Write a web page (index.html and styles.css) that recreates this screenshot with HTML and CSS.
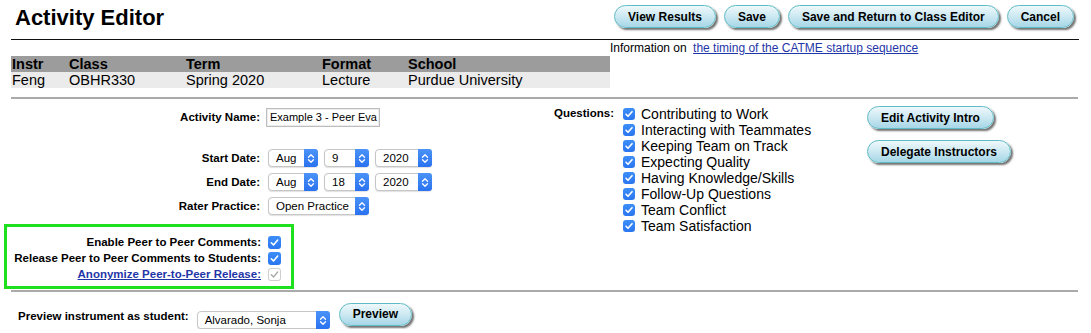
FILE: index.html
```html
<!DOCTYPE html>
<html lang="en">
<head>
  <meta charset="UTF-8" />
  <title>Activity Editor</title>
  <link rel="stylesheet" href="styles.css">
</head>
<body>
  <div class="page">
    <div class="top-bar">
      <h1>Activity Editor</h1>
      <div class="top-buttons">
        <button class="pill">View Results</button>
        <button class="pill">Save</button>
        <button class="pill">Save and Return to Class Editor</button>
        <button class="pill">Cancel</button>
      </div>
    </div>

    <div class="class-row">
      <div class="class-table">
        <div class="ct-head">
          <span>Instr</span><span>Class</span><span>Term</span><span>Format</span><span>School</span>
        </div>
        <div class="ct-body">
          <span>Feng</span><span>OBHR330</span><span>Spring 2020</span><span>Lecture</span><span>Purdue University</span>
        </div>
      </div>
      <div class="info">Information on <a href="#">the timing of the CATME startup sequence</a></div>
    </div>

    <div class="rule"></div>

    <div class="form-area">
      <div class="left-col">
        <div class="frow first">
          <label>Activity Name:</label>
          <div class="text-input">Example 3 - Peer Eva</div>
        </div>
        <div class="frow">
          <label>Start Date:</label>
          <div class="ctrls">
            <span class="select w-mon"><span class="val">Aug</span><span class="arrow"><svg width="8" height="11" viewBox="0 0 8 11"><path d="M1.5 4.2 L4 1.8 L6.5 4.2 M1.5 6.8 L4 9.2 L6.5 6.8" fill="none" stroke="#fff" stroke-width="1.3" stroke-linecap="round" stroke-linejoin="round"/></svg></span></span>
            <span class="select w-day"><span class="val">9</span><span class="arrow"><svg width="8" height="11" viewBox="0 0 8 11"><path d="M1.5 4.2 L4 1.8 L6.5 4.2 M1.5 6.8 L4 9.2 L6.5 6.8" fill="none" stroke="#fff" stroke-width="1.3" stroke-linecap="round" stroke-linejoin="round"/></svg></span></span>
            <span class="select w-year"><span class="val">2020</span><span class="arrow"><svg width="8" height="11" viewBox="0 0 8 11"><path d="M1.5 4.2 L4 1.8 L6.5 4.2 M1.5 6.8 L4 9.2 L6.5 6.8" fill="none" stroke="#fff" stroke-width="1.3" stroke-linecap="round" stroke-linejoin="round"/></svg></span></span>
          </div>
        </div>
        <div class="frow">
          <label>End Date:</label>
          <div class="ctrls">
            <span class="select w-mon"><span class="val">Aug</span><span class="arrow"><svg width="8" height="11" viewBox="0 0 8 11"><path d="M1.5 4.2 L4 1.8 L6.5 4.2 M1.5 6.8 L4 9.2 L6.5 6.8" fill="none" stroke="#fff" stroke-width="1.3" stroke-linecap="round" stroke-linejoin="round"/></svg></span></span>
            <span class="select w-day"><span class="val">18</span><span class="arrow"><svg width="8" height="11" viewBox="0 0 8 11"><path d="M1.5 4.2 L4 1.8 L6.5 4.2 M1.5 6.8 L4 9.2 L6.5 6.8" fill="none" stroke="#fff" stroke-width="1.3" stroke-linecap="round" stroke-linejoin="round"/></svg></span></span>
            <span class="select w-year"><span class="val">2020</span><span class="arrow"><svg width="8" height="11" viewBox="0 0 8 11"><path d="M1.5 4.2 L4 1.8 L6.5 4.2 M1.5 6.8 L4 9.2 L6.5 6.8" fill="none" stroke="#fff" stroke-width="1.3" stroke-linecap="round" stroke-linejoin="round"/></svg></span></span>
          </div>
        </div>
        <div class="frow">
          <label>Rater Practice:</label>
          <div class="ctrls">
            <span class="select w-rater"><span class="val">Open Practice</span><span class="arrow"><svg width="8" height="11" viewBox="0 0 8 11"><path d="M1.5 4.2 L4 1.8 L6.5 4.2 M1.5 6.8 L4 9.2 L6.5 6.8" fill="none" stroke="#fff" stroke-width="1.3" stroke-linecap="round" stroke-linejoin="round"/></svg></span></span>
          </div>
        </div>

        <div class="peer-box">
          <div class="prow">
            <label>Enable Peer to Peer Comments:</label>
            <span class="cb"><svg width="13" height="13" viewBox="0 0 13 13"><path d="M3.3 6.8 L5.5 9 L9.7 4" fill="none" stroke="#fff" stroke-width="1.6" stroke-linecap="round" stroke-linejoin="round"/></svg></span>
          </div>
          <div class="prow">
            <label>Release Peer to Peer Comments to Students:</label>
            <span class="cb"><svg width="13" height="13" viewBox="0 0 13 13"><path d="M3.3 6.8 L5.5 9 L9.7 4" fill="none" stroke="#fff" stroke-width="1.6" stroke-linecap="round" stroke-linejoin="round"/></svg></span>
          </div>
          <div class="prow">
            <label><a href="#">Anonymize Peer-to-Peer Release:</a></label>
            <span class="cb disabled"><svg width="13" height="13" viewBox="0 0 13 13"><path d="M3.3 6.8 L5.5 9 L9.7 4" fill="none" stroke="#a8a8a8" stroke-width="1.3" stroke-linecap="round" stroke-linejoin="round"/></svg></span>
          </div>
        </div>
      </div>

      <div class="questions">
        <div class="q-label">Questions:</div>
        <ul class="q-list">
          <li><span class="cb"><svg width="12" height="12" viewBox="0 0 12 12"><path d="M3 6.3 L5 8.3 L9 3.7" fill="none" stroke="#fff" stroke-width="1.6" stroke-linecap="round" stroke-linejoin="round"/></svg></span>Contributing to Work</li>
          <li><span class="cb"><svg width="12" height="12" viewBox="0 0 12 12"><path d="M3 6.3 L5 8.3 L9 3.7" fill="none" stroke="#fff" stroke-width="1.6" stroke-linecap="round" stroke-linejoin="round"/></svg></span>Interacting with Teammates</li>
          <li><span class="cb"><svg width="12" height="12" viewBox="0 0 12 12"><path d="M3 6.3 L5 8.3 L9 3.7" fill="none" stroke="#fff" stroke-width="1.6" stroke-linecap="round" stroke-linejoin="round"/></svg></span>Keeping Team on Track</li>
          <li><span class="cb"><svg width="12" height="12" viewBox="0 0 12 12"><path d="M3 6.3 L5 8.3 L9 3.7" fill="none" stroke="#fff" stroke-width="1.6" stroke-linecap="round" stroke-linejoin="round"/></svg></span>Expecting Quality</li>
          <li><span class="cb"><svg width="12" height="12" viewBox="0 0 12 12"><path d="M3 6.3 L5 8.3 L9 3.7" fill="none" stroke="#fff" stroke-width="1.6" stroke-linecap="round" stroke-linejoin="round"/></svg></span>Having Knowledge/Skills</li>
          <li><span class="cb"><svg width="12" height="12" viewBox="0 0 12 12"><path d="M3 6.3 L5 8.3 L9 3.7" fill="none" stroke="#fff" stroke-width="1.6" stroke-linecap="round" stroke-linejoin="round"/></svg></span>Follow-Up Questions</li>
          <li><span class="cb"><svg width="12" height="12" viewBox="0 0 12 12"><path d="M3 6.3 L5 8.3 L9 3.7" fill="none" stroke="#fff" stroke-width="1.6" stroke-linecap="round" stroke-linejoin="round"/></svg></span>Team Conflict</li>
          <li><span class="cb"><svg width="12" height="12" viewBox="0 0 12 12"><path d="M3 6.3 L5 8.3 L9 3.7" fill="none" stroke="#fff" stroke-width="1.6" stroke-linecap="round" stroke-linejoin="round"/></svg></span>Team Satisfaction</li>
        </ul>
      </div>

      <div class="side-buttons">
        <button class="pill">Edit Activity Intro</button>
        <button class="pill">Delegate Instructors</button>
      </div>
    </div>

    <div class="rule bottom"></div>

    <div class="preview-row">
      <label>Preview instrument as student:</label>
      <span class="select w-student"><span class="val">Alvarado, Sonja</span><span class="arrow"><svg width="8" height="11" viewBox="0 0 8 11"><path d="M1.5 4.2 L4 1.8 L6.5 4.2 M1.5 6.8 L4 9.2 L6.5 6.8" fill="none" stroke="#fff" stroke-width="1.3" stroke-linecap="round" stroke-linejoin="round"/></svg></span></span>
      <button class="pill">Preview</button>
    </div>
  </div>
</body>
</html>
```

FILE: styles.css
```css
body {
  font-family: "Liberation Sans", Arial, Helvetica, sans-serif;
  margin: 0;
  padding: 0;
  color: #000;
  background: #fff;
}

.page {
  margin: 0 12px 0 11px;
}

a {
  color: #1f36a8;
}

/* top bar */
.top-bar {
  display: flex;
  justify-content: space-between;
  align-items: flex-start;
  height: 39px;
  border-bottom: 1px solid #111;
}

.top-bar h1 {
  font-size: 22px;
  line-height: 26px;
  margin: 5px 0 0 4px;
}

.top-buttons {
  display: flex;
  gap: 8px;
  margin: 5px 5px 0 0;
}

.pill {
  font-family: "Liberation Sans", Arial, sans-serif;
  font-size: 12px;
  font-weight: bold;
  height: 23px;
  padding: 0 13px;
  border: 1px solid #5fbcc4;
  border-radius: 12px;
  background: linear-gradient(#eef8fb, #cfeaf3 45%, #a7d6e7);
  box-shadow: 2px 2px 2px rgba(0, 0, 0, 0.55);
  color: #000;
  cursor: pointer;
}

/* class info */
.class-row {
  display: flex;
  align-items: flex-start;
}

.class-table {
  width: 599px;
  margin-top: 16px;
  font-size: 14.5px;
  line-height: 16px;
}

.ct-head,
.ct-body {
  display: grid;
  grid-template-columns: 57px 117px 136px 86px 1fr;
  padding-left: 1px;
  height: 16px;
}

.ct-head {
  background: #9c9c9c;
  font-weight: bold;
}

.ct-body {
  background: #ebebeb;
}

.info {
  font-size: 12px;
  line-height: 14px;
  margin-top: 1px;
  white-space: nowrap;
}

.info a {
  margin-left: 3px;
}

.rule {
  height: 2px;
  background: #aaa;
  margin-top: 9px;
  margin-right: 1px;
}

.rule.bottom {
  margin-top: 1px;
}

/* form */
.form-area {
  display: grid;
  grid-template-columns: 543px 313px auto;
}

.left-col {
  padding-top: 8px;
}

.frow {
  display: grid;
  grid-template-columns: 249px auto;
  column-gap: 6px;
  align-items: center;
  height: 24px;
}

.frow.first {
  height: 20px;
  margin-bottom: 19px;
}

.frow label,
.prow label,
.q-label,
.preview-row label {
  font-size: 11.5px;
  font-weight: bold;
  text-align: right;
  white-space: nowrap;
}

.text-input {
  width: 109px;
  height: 17px;
  border: 1px solid #bdbdbd;
  box-shadow: inset 0 0 0 1px #ececec;
  font-size: 11px;
  line-height: 17px;
  padding: 0 0 0 3px;
  overflow: hidden;
  white-space: nowrap;
}

.ctrls {
  display: flex;
  gap: 6px;
  padding-left: 2px;
}

.select {
  display: inline-flex;
  align-items: stretch;
  height: 16px;
  border: 1px solid #c6c6c6;
  border-radius: 4px;
  background: #fff;
  box-shadow: 0 1px 1px rgba(0, 0, 0, 0.12);
  box-sizing: content-box;
  font-size: 11.5px;
  line-height: 16px;
}

.select .val {
  flex: 1;
  padding-left: 7px;
  white-space: nowrap;
  overflow: hidden;
}

.select .arrow {
  width: 14px;
  display: flex;
  align-items: center;
  justify-content: center;
  background: linear-gradient(#4b93f8, #2a72ef);
  border-radius: 0 3px 3px 0;
  margin: -1px -1px -1px 0;
}

.w-mon { width: 48px; }
.w-day { width: 43px; }
.w-year { width: 55px; }
.w-rater { width: 99px; }
.w-student { width: 131px; }

.cb {
  display: inline-flex;
  width: 12px;
  height: 12px;
  border-radius: 3px;
  background: linear-gradient(#3d8ef8, #2a76ef);
  flex-shrink: 0;
}

.cb.disabled {
  background: #fff;
  box-shadow: inset 0 0 0 1px #cfcfcf;
}

/* peer comment box */
.peer-box {
  width: 284px;
  margin: 6px 0 0 -7px;
  border: 3px solid #1fe01f;
  padding: 7px 0 4px;
}

.prow {
  display: grid;
  grid-template-columns: 254px 13px;
  column-gap: 7px;
  align-items: center;
  height: 16px;
}

.prow .cb {
  width: 13px;
  height: 13px;
}

/* questions */
.questions {
  display: flex;
  align-items: flex-start;
  padding-top: 7px;
}

.q-label {
  width: 59px;
  margin-top: 1px;
}

.q-list {
  list-style: none;
  margin: 0 0 0 10px;
  padding: 0;
  font-size: 14px;
  line-height: 16px;
}

.q-list li {
  display: flex;
  align-items: center;
  gap: 6px;
}

.side-buttons {
  display: flex;
  flex-direction: column;
  align-items: flex-start;
  gap: 11px;
  padding-top: 7px;
}

/* preview */
.preview-row {
  display: flex;
  align-items: center;
  padding: 10px 0 0 7px;
}

.preview-row label {
  margin-right: 8px;
}

.preview-row .select {
  margin-top: 9px;
}

.preview-row .pill {
  margin: -3px 0 0 9px;
}
```
